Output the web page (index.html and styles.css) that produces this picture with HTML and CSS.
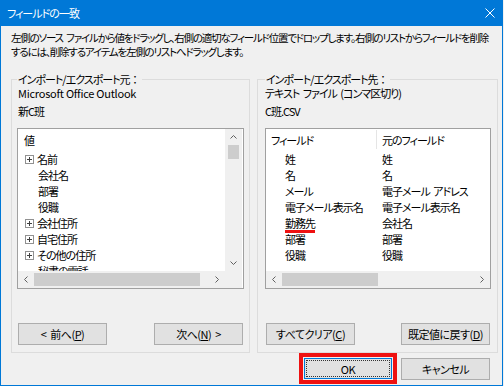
FILE: index.html
```html
<!DOCTYPE html>
<html lang="ja">
<head>
    <meta charset="UTF-8">
    <meta name="viewport" content="width=device-width, initial-scale=1.0">
    <title>フィールドの一致</title>
    <link rel="stylesheet" href="styles.css">
</head>
<body>
    <div class="window">
        <div class="titlebar">
            <span class="title">フィールドの一致</span>
            <svg class="close" width="10" height="10" viewBox="0 0 10 10"><path d="M0.5 0.5L9.5 9.5M9.5 0.5L0.5 9.5" stroke="#fff" stroke-width="1"/></svg>
        </div>

        <p class="desc">左側のソース ファイルから値をドラッグし、右側の適切なフィールド位置でドロップします。右側のリストからフィールドを削除<br>するには、削除するアイテムを左側のリストへドラッグします。</p>

        <div class="panes">
            <fieldset class="group group-left">
                <legend>インポート/エクスポート元<span class="colon">：</span></legend>
                <div class="info latin">Microsoft Office Outlook</div>
                <div class="info info-second">新C班</div>

                <div class="listbox listbox-tree">
                    <div class="list-content">
                        <div class="tree-head">値</div>
                        <div class="node"><svg class="plus" width="9" height="9" viewBox="0 0 9 9"><rect x="0.5" y="0.5" width="8" height="8" fill="#fff" stroke="#919191"/><path d="M2 4.5h5M4.5 2v5" stroke="#404040"/></svg>名前</div>
                        <div class="leaf">会社名</div>
                        <div class="leaf">部署</div>
                        <div class="leaf">役職</div>
                        <div class="node"><svg class="plus" width="9" height="9" viewBox="0 0 9 9"><rect x="0.5" y="0.5" width="8" height="8" fill="#fff" stroke="#919191"/><path d="M2 4.5h5M4.5 2v5" stroke="#404040"/></svg>会社住所</div>
                        <div class="node"><svg class="plus" width="9" height="9" viewBox="0 0 9 9"><rect x="0.5" y="0.5" width="8" height="8" fill="#fff" stroke="#919191"/><path d="M2 4.5h5M4.5 2v5" stroke="#404040"/></svg>自宅住所</div>
                        <div class="node"><svg class="plus" width="9" height="9" viewBox="0 0 9 9"><rect x="0.5" y="0.5" width="8" height="8" fill="#fff" stroke="#919191"/><path d="M2 4.5h5M4.5 2v5" stroke="#404040"/></svg>その他の住所</div>
                        <div class="leaf">秘書の電話</div>
                    </div>
                    <div class="vscroll">
                        <div class="arrow-v"><svg width="7" height="4" viewBox="0 0 7 4"><path d="M0.5 3.5L3.5 0.5L6.5 3.5" fill="none" stroke="#606060"/></svg></div>
                        <div class="thumb-v"></div>
                        <div class="fill"></div>
                        <div class="arrow-v"><svg width="7" height="4" viewBox="0 0 7 4"><path d="M0.5 0.5L3.5 3.5L6.5 0.5" fill="none" stroke="#606060"/></svg></div>
                    </div>
                    <div class="hscroll">
                        <div class="arrow-h"><svg width="4" height="7" viewBox="0 0 4 7"><path d="M3.5 0.5L0.5 3.5L3.5 6.5" fill="none" stroke="#606060"/></svg></div>
                        <div class="thumb-h thumb-left"></div>
                        <div class="fill"></div>
                        <div class="arrow-h"><svg width="4" height="7" viewBox="0 0 4 7"><path d="M0.5 0.5L3.5 3.5L0.5 6.5" fill="none" stroke="#606060"/></svg></div>
                    </div>
                    <div class="corner"></div>
                </div>

                <div class="btn-row">
                    <button class="btn">&lt; 前へ(<u>P</u>)</button>
                    <button class="btn">次へ(<u>N</u>) &gt;</button>
                </div>
            </fieldset>

            <fieldset class="group group-right">
                <legend>インポート/エクスポート先<span class="colon">：</span></legend>
                <div class="info">テキスト ファイル (コンマ区切り)</div>
                <div class="info info-second">C班.CSV</div>

                <div class="listbox listbox-view">
                    <div class="list-content">
                        <div class="view-head">
                            <div class="col-a">フィールド</div>
                            <div class="col-b">元のフィールド</div>
                        </div>
                        <div class="view-row"><div class="col-a">姓</div><div class="col-b">姓</div></div>
                        <div class="view-row"><div class="col-a">名</div><div class="col-b">名</div></div>
                        <div class="view-row"><div class="col-a">メール</div><div class="col-b">電子メール アドレス</div></div>
                        <div class="view-row"><div class="col-a">電子メール表示名</div><div class="col-b">電子メール表示名</div></div>
                        <div class="view-row"><div class="col-a"><span class="mark">勤務先</span></div><div class="col-b">会社名</div></div>
                        <div class="view-row"><div class="col-a">部署</div><div class="col-b">部署</div></div>
                        <div class="view-row"><div class="col-a">役職</div><div class="col-b">役職</div></div>
                    </div>
                    <div class="hscroll">
                        <div class="arrow-h"><svg width="4" height="7" viewBox="0 0 4 7"><path d="M3.5 0.5L0.5 3.5L3.5 6.5" fill="none" stroke="#606060"/></svg></div>
                        <div class="thumb-h thumb-right"></div>
                        <div class="fill"></div>
                        <div class="arrow-h"><svg width="4" height="7" viewBox="0 0 4 7"><path d="M0.5 0.5L3.5 3.5L0.5 6.5" fill="none" stroke="#606060"/></svg></div>
                    </div>
                </div>

                <div class="btn-row">
                    <button class="btn">すべてクリア(<u>C</u>)</button>
                    <button class="btn">既定値に戻す(<u>D</u>)</button>
                </div>
            </fieldset>
        </div>

        <div class="footer">
            <span class="highlight"><button class="btn btn-default latin">OK</button></span>
            <button class="btn">キャンセル</button>
        </div>
    </div>
</body>
</html>
```

FILE: styles.css
```css
:root {
    --title-color: #0078d7;
    --face-color: #f0f0f0;
    --group-border: #dcdcdc;
    --list-border: #a0a0a0;
    --button-face: #e1e1e1;
    --button-border: #adadad;
    --thumb-color: #cdcdcd;
    --mark-color: #ee1111;
}

body {
    margin: 0;
    background: var(--face-color);
    font-family: "Noto Sans CJK JP", "Noto Sans", sans-serif;
    font-size: 11px;
    color: #000;
    font-feature-settings: "palt";
    letter-spacing: -1px;
    word-spacing: 2px;
}

.latin {
    letter-spacing: -0.25px;
    word-spacing: 0;
}

.window {
    width: 503px;
    height: 386px;
    box-sizing: border-box;
    border: 1px solid var(--title-color);
    border-top: none;
    background: var(--face-color);
}

.titlebar {
    height: 26px;
    background: var(--title-color);
    display: flex;
    align-items: center;
    justify-content: space-between;
    padding: 0 7px 0 6px;
    color: #fff;
}

.title {
    font-size: 11px;
    line-height: 14px;
}

.desc {
    margin: 5px 0 0 0;
    padding-left: 10px;
    font-size: 10.5px;
    letter-spacing: -1.2px;
    line-height: 14px;
    white-space: nowrap;
}

.panes {
    display: flex;
    gap: 7px;
    padding-left: 10px;
    margin-top: 14px;
}

.group {
    margin: 0;
    border: 1px solid var(--group-border);
    box-sizing: border-box;
    padding: 0 5px 7px 5px;
    min-width: 0;
}

.group-left {
    width: 239px;
}

.group-right {
    width: 241px;
    padding: 0 6px 7px 7px;
}

.group legend {
    padding: 0 1px;
    line-height: 12px;
}

.colon {
    font-feature-settings: normal;
    letter-spacing: 0;
}

.info {
    line-height: 14px;
    padding-left: 1px;
    white-space: nowrap;
}

.info:first-of-type {
    margin-top: 1px;
}

.group-right .info {
    padding-left: 0;
}

.info-second {
    margin-top: 4px;
}

.listbox {
    margin-top: 10px;
    height: 161px;
    box-sizing: border-box;
    border: 1px solid var(--list-border);
    background: #fff;
    display: grid;
    grid-template-rows: 142px 17px;
    overflow: hidden;
}

.listbox-tree {
    grid-template-columns: 207px 17px;
}

.listbox-view {
    grid-template-columns: 1fr;
}

.list-content {
    overflow: hidden;
    white-space: nowrap;
}

.tree-head {
    height: 22px;
    line-height: 22px;
    padding-left: 6px;
}

.node,
.leaf {
    height: 16px;
    line-height: 16px;
}

.node {
    display: flex;
    align-items: center;
    padding-left: 7px;
}

.plus {
    margin-right: 3px;
    flex: none;
}

.leaf {
    padding-left: 20px;
}

.vscroll {
    background: var(--face-color);
    display: flex;
    flex-direction: column;
}

.hscroll {
    background: var(--face-color);
    display: flex;
    align-items: center;
}

.corner {
    background: var(--face-color);
}

.fill {
    flex: 1;
}

.arrow-v {
    height: 16px;
    display: flex;
    align-items: center;
    justify-content: center;
}

.arrow-h {
    width: 16px;
    height: 17px;
    display: flex;
    align-items: center;
    justify-content: center;
    flex: none;
}

.thumb-v {
    height: 14px;
    margin: 0 3px 0 3px;
    background: var(--thumb-color);
}

.thumb-h {
    height: 13px;
    background: var(--thumb-color);
    flex: none;
}

.thumb-left {
    width: 166px;
}

.thumb-right {
    width: 96px;
}

.view-head {
    height: 22px;
    display: flex;
    align-items: flex-start;
}

.view-head .col-a {
    width: 105px;
    padding-left: 5px;
    line-height: 22px;
}

.view-head .col-b {
    height: 19px;
    margin-top: 1px;
    line-height: 20px;
    border-left: 1px solid #e5e5e5;
    padding-left: 5px;
}

.view-row {
    height: 16px;
    line-height: 16px;
    display: flex;
}

.view-row .col-a {
    width: 91px;
    padding-left: 19px;
}

.view-row .col-b {
    padding-left: 6px;
}

.mark {
    position: relative;
    display: inline-block;
    height: 16px;
}

.mark::after {
    content: "";
    position: absolute;
    left: 0;
    right: 0;
    top: 15px;
    height: 3px;
    background: var(--mark-color);
}

.btn-row {
    margin-top: 34px;
    display: flex;
    justify-content: space-between;
    padding: 0 1px;
}

.btn {
    width: 89px;
    height: 22px;
    padding: 0;
    background: var(--button-face);
    border: 1px solid var(--button-border);
    font-family: inherit;
    font-size: 11px;
    letter-spacing: -0.5px;
    word-spacing: 2px;
    color: #000;
    font-feature-settings: "palt";
}

.footer {
    display: flex;
    justify-content: flex-end;
    align-items: center;
    gap: 4px;
    padding-right: 12px;
}

.highlight {
    display: block;
    border: 4px solid var(--mark-color);
    padding: 1px;
}

.btn-default {
    display: block;
    width: 88px;
    height: 21px;
    border-color: var(--title-color);
    outline: 1px dotted #333;
    outline-offset: -3px;
}
```
